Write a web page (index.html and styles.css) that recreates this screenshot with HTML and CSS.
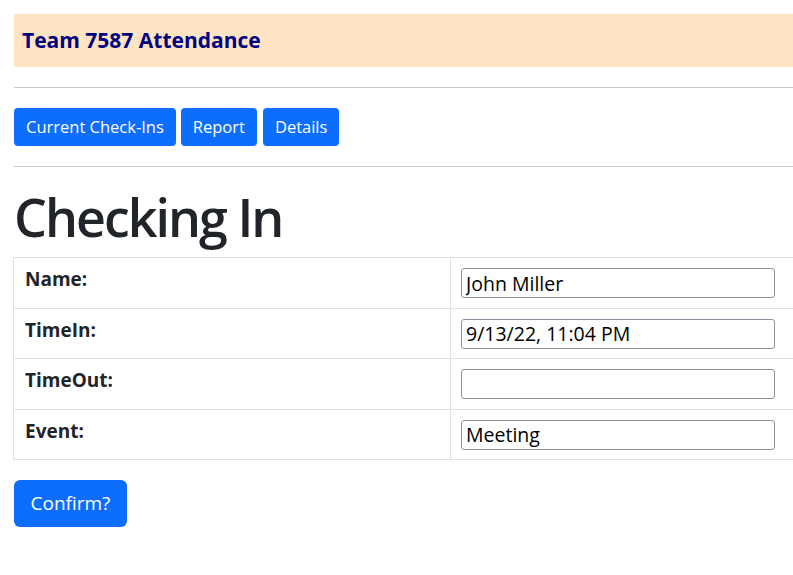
FILE: index.html
```html
<!DOCTYPE html>
<html lang="en">
<head>
<meta charset="utf-8">
<title>Team 7587 Attendance</title>
<link rel="stylesheet" href="styles.css">
</head>
<body>
<div class="page">
  <header class="banner">
    <h2 class="banner-title">Team 7587 Attendance</h2>
  </header>
  <hr class="rule">
  <nav class="nav">
    <a class="btn" href="#">Current Check-Ins</a>
    <a class="btn" href="#">Report</a>
    <a class="btn" href="#">Details</a>
  </nav>
  <hr class="rule">
  <h1 class="title">Checking In</h1>
  <table class="form-table">
    <tr>
      <th>Name:</th>
      <td><input class="field" type="text" value="John Miller"></td>
    </tr>
    <tr>
      <th>TimeIn:</th>
      <td><input class="field" type="text" value="9/13/22, 11:04 PM"></td>
    </tr>
    <tr>
      <th>TimeOut:</th>
      <td><input class="field" type="text" value=""></td>
    </tr>
    <tr>
      <th>Event:</th>
      <td><input class="field" type="text" value="Meeting"></td>
    </tr>
  </table>
  <button class="btn btn-lg" type="button">Confirm?</button>
</div>
</body>
</html>
```

FILE: styles.css
```css
html, body {
  margin: 0;
  padding: 0;
  overflow: hidden;
  background: #fff;
}
body {
  font-family: "Open Sans", "Noto Sans", sans-serif;
  color: #212529;
  font-size: 16px;
}
.page {
  width: 900px;
  padding: 14px 0 0 14px;
}
.banner {
  background: #ffe4c4;
  height: 53px;
  display: flex;
  align-items: center;
  padding-left: 8px;
}
.banner-title {
  margin: 0;
  font-size: 21px;
  font-weight: 700;
  color: #000080;
  line-height: 1;
}
.rule {
  border: 0;
  border-top: 1px solid #c8c8c8;
  margin: 20px 0;
  height: 0;
}
.nav {
  display: flex;
  gap: 5px;
  height: 38px;
}
.btn {
  display: inline-flex;
  align-items: center;
  background: #0d6efd;
  color: #fff;
  text-decoration: none;
  font-family: inherit;
  font-size: 16.5px;
  padding: 0 12px 2px;
  border: 0;
  border-radius: 4px;
  height: 38px;
  box-sizing: border-box;
}
.nav .btn:last-child {
  margin-left: 1px;
}
.title {
  margin: 0;
  font-size: 52px;
  font-weight: 600;
  line-height: 60px;
  height: 70px;
  letter-spacing: -2px;
}
.form-table {
  margin-left: -1px;
  border-collapse: collapse;
  width: 820px;
  table-layout: fixed;
}
.form-table th,
.form-table td {
  border: 1px solid #dee2e6;
  vertical-align: top;
  height: 50.5px;
  box-sizing: border-box;
  padding: 0;
}
.form-table th {
  width: 437px;
  text-align: left;
  font-size: 19px;
  font-weight: 700;
  padding: 9px 0 0 11px;
  line-height: 24px;
}
.form-table td {
  padding: 10px 0 0 10px;
}
.field {
  display: block;
  width: 314px;
  height: 30px;
  box-sizing: border-box;
  border: 1px solid #8f8f9d;
  border-radius: 3px;
  font-family: inherit;
  font-size: 19.5px;
  color: #000;
  padding: 0 4px;
  margin: 0;
  background: #fff;
}
.btn-lg {
  margin-top: 20px;
  height: 47px;
  font-size: 19px;
  padding: 0 16.5px 1px;
  border-radius: 6px;
}
```
